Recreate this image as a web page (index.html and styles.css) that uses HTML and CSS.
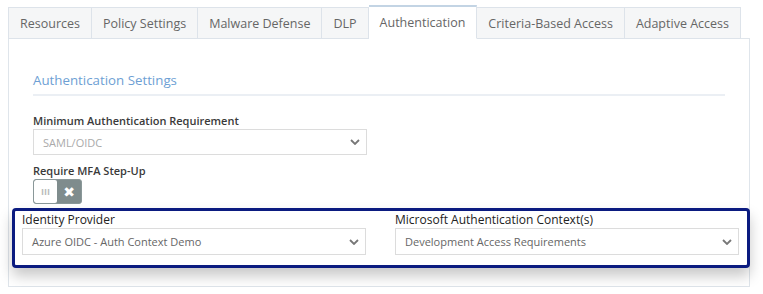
FILE: index.html
```html
<!DOCTYPE html>
<html lang="en">
<head>
    <meta charset="UTF-8">
    <meta name="viewport" content="width=device-width, initial-scale=1.0">
    <title>Authentication</title>
    <link rel="stylesheet" href="styles.css">
</head>
<body>
    <div class="tabs">
        <div class="tab">Resources</div>
        <div class="tab">Policy Settings</div>
        <div class="tab">Malware Defense</div>
        <div class="tab">DLP</div>
        <div class="tab active">Authentication</div>
        <div class="tab">Criteria-Based Access</div>
        <div class="tab">Adaptive Access</div>
    </div>

    <div class="panel">
        <h3 class="section-title">Authentication Settings</h3>

        <div class="row">
            <div class="field">
                <label class="field-label">Minimum Authentication Requirement</label>
                <div class="select disabled">
                    <span>SAML/OIDC</span>
                    <svg class="chevron" width="10" height="6" viewBox="0 0 10 6"><path d="M1 1l4 4 4-4" fill="none" stroke="currentColor" stroke-width="1.8"/></svg>
                </div>
            </div>
        </div>

        <label class="field-label mfa-label">Require MFA Step-Up</label>
        <div class="toggle">
            <span class="knob">III</span>
            <span class="off">&#10006;</span>
        </div>

        <div class="highlight">
            <div class="field">
                <label class="box-label">Identity Provider</label>
                <div class="select">
                    <span>Azure OIDC - Auth Context Demo</span>
                    <svg class="chevron" width="10" height="6" viewBox="0 0 10 6"><path d="M1 1l4 4 4-4" fill="none" stroke="currentColor" stroke-width="1.8"/></svg>
                </div>
            </div>
            <div class="field">
                <label class="box-label">Microsoft Authentication Context(s)</label>
                <div class="select">
                    <span>Development Access Requirements</span>
                    <svg class="chevron" width="10" height="6" viewBox="0 0 10 6"><path d="M1 1l4 4 4-4" fill="none" stroke="currentColor" stroke-width="1.8"/></svg>
                </div>
            </div>
        </div>
    </div>
</body>
</html>
```

FILE: styles.css
```css
body {
    font-family: 'Open Sans', 'Liberation Sans', sans-serif;
    background-color: #fff;
    margin: 0;
    padding: 0;
    color: #333;
}

.tabs {
    display: flex;
    align-items: flex-end;
    padding: 5px 0 0 8px;
    margin-bottom: -1px;
    position: relative;
    z-index: 1;
}

.tab {
    box-sizing: border-box;
    height: 32px;
    padding: 0 11px;
    display: flex;
    align-items: center;
    font-size: 12.5px;
    color: #666;
    background-color: #f5f6f7;
    border: 1px solid #dde3ea;
    border-left: none;
}

.tab:first-child {
    border-left: 1px solid #dde3ea;
}

.tab.active {
    height: 34px;
    background-color: #fff;
    border-top: 2px solid #c3d4e4;
    border-bottom-color: #fff;
}

.panel {
    margin: 0 13px 0 8px;
    border: 1px solid #dfe5eb;
    padding: 32px 24px 18px 24px;
}

.section-title {
    margin: 0;
    font-size: 13.3px;
    line-height: 19px;
    font-weight: normal;
    color: #6e9fd4;
    padding-bottom: 4px;
    border-bottom: 2px solid #ebeff4;
}

.row {
    display: grid;
    grid-template-columns: 1fr 1fr;
    gap: 25px;
    margin-top: 17px;
}

.field-label {
    display: block;
    font-size: 11px;
    line-height: 15px;
    font-weight: 600;
    color: #3a3a3a;
    margin-bottom: 1px;
}

.mfa-label {
    margin-top: 8px;
    margin-bottom: 1px;
}

.select {
    box-sizing: border-box;
    height: 26px;
    display: flex;
    align-items: center;
    justify-content: space-between;
    padding: 0 6px 0 9px;
    border: 1px solid #dcdcdc;
    background-color: #fff;
    font-size: 11px;
    color: #666;
}

.select.disabled {
    color: #aaa;
}

.chevron {
    color: #777;
}

.toggle {
    box-sizing: border-box;
    display: flex;
    width: 49px;
    height: 25px;
    border: 1px solid #8a9899;
    border-radius: 3px;
    background-color: #7f8c8d;
    overflow: hidden;
}

.knob {
    width: 23px;
    background-color: #fff;
    border-radius: 2px;
    display: flex;
    align-items: center;
    justify-content: center;
    font-size: 9px;
    font-weight: bold;
    color: #bbb;
}

.off {
    flex: 1;
    display: flex;
    align-items: center;
    justify-content: center;
    color: #fff;
    font-size: 14px;
    font-family: 'DejaVu Sans', sans-serif;
}

.highlight {
    display: grid;
    grid-template-columns: 1fr 1fr;
    gap: 29px;
    margin: 4px -25px 0 -21px;
    padding: 1px 8px 10px 7px;
    border: 3px solid #0b1b80;
    border-radius: 4px;
    background-color: #fff;
    box-shadow: 0 8px 14px rgba(0, 0, 0, 0.22);
    position: relative;
}

.box-label {
    display: block;
    font-size: 12px;
    line-height: 16px;
    color: #222;
}

.highlight .select {
    height: 27px;
}
```
